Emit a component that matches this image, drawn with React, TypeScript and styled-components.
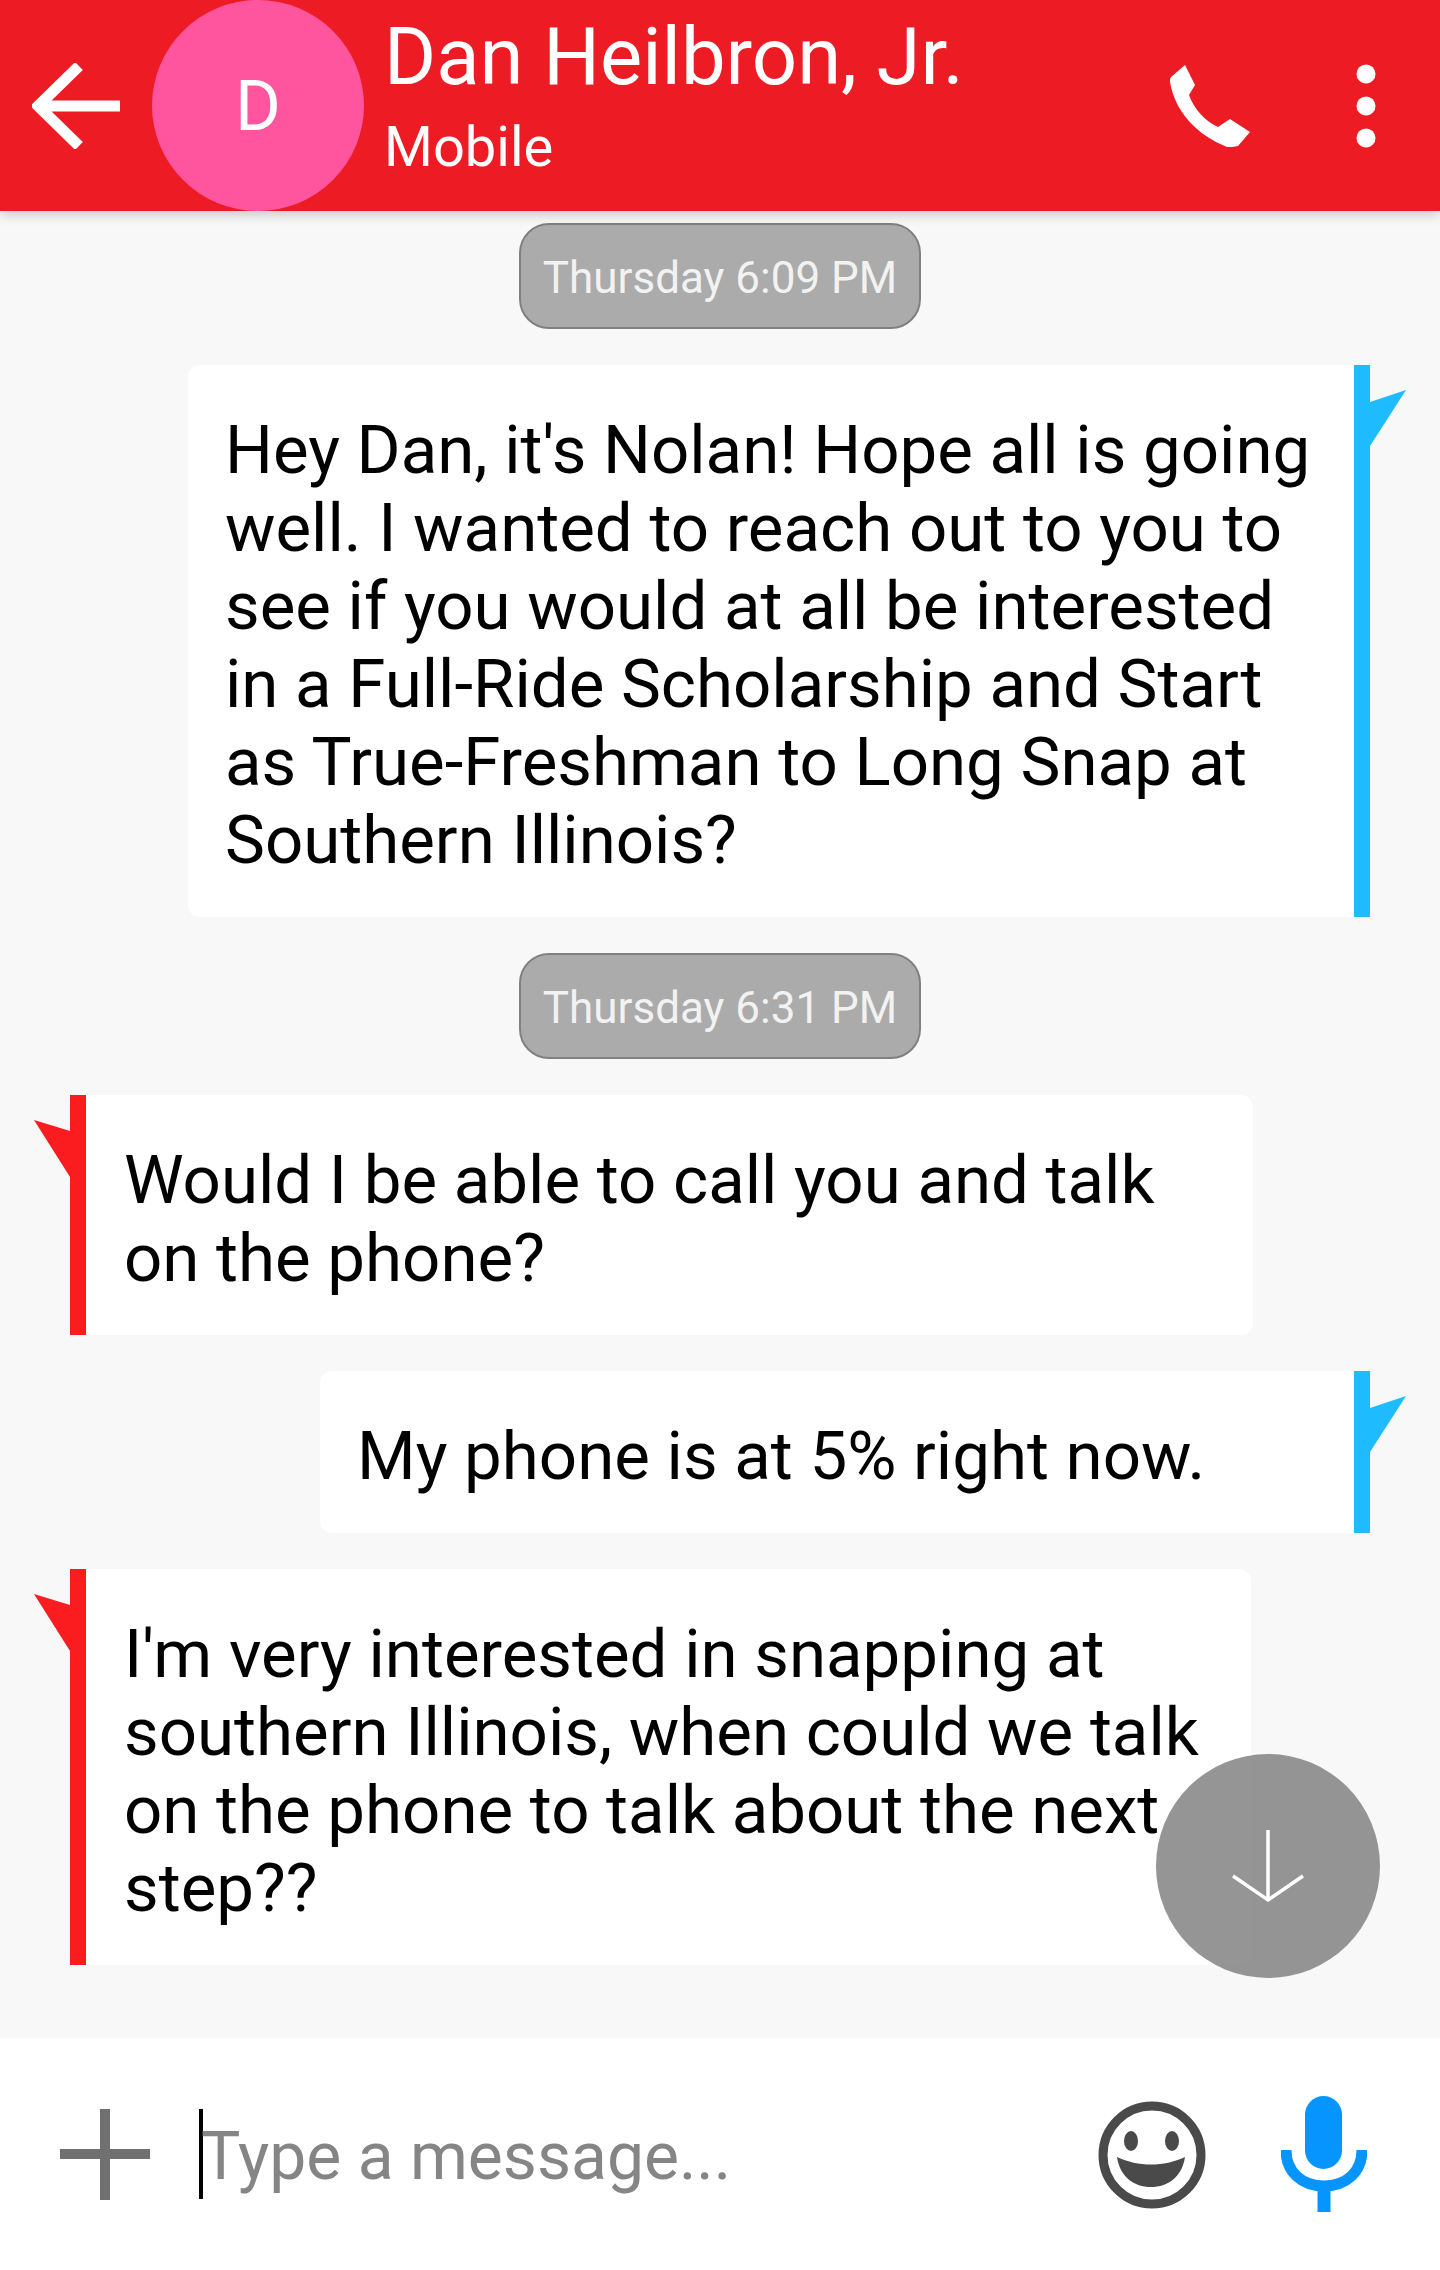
import React from 'react';
import styled, { createGlobalStyle } from 'styled-components';

const GlobalStyle = createGlobalStyle`
  html, body {
    margin: 0;
    padding: 0;
    background: #f8f8f8;
  }
  * {
    box-sizing: border-box;
  }
`;

function BackIcon() {
  return (
    <svg width="88" height="86" viewBox="0 0 88 86" fill="none" stroke="#fff" strokeWidth="11">
      <path d="M88 43H6" />
      <path d="M47 3 6 43l0 0 41 40" strokeLinejoin="miter" />
    </svg>
  );
}

function PhoneIcon() {
  return (
    <svg width="80" height="82" viewBox="0 0 80 82" fill="#fff">
      <path d="M15 0 25 20 19 30C24 44 35 56 48 62L60 54 80 67 68 81C64 82 60 82 57 82 27 70 5 47 0 17 0 14 0 13 1 12Z" />
    </svg>
  );
}

function MenuIcon() {
  return (
    <svg width="20" height="84" viewBox="0 0 20 84" fill="#fff">
      <circle cx="10" cy="10" r="9.5" />
      <circle cx="10" cy="42" r="9.5" />
      <circle cx="10" cy="74" r="9.5" />
    </svg>
  );
}

function PlusIcon() {
  return (
    <svg width="90" height="91" viewBox="0 0 90 91" fill="#707070">
      <rect x="40" width="10" height="91" />
      <rect y="40" width="90" height="10" />
    </svg>
  );
}

function SmileyIcon() {
  return (
    <svg width="108" height="110" viewBox="0 -2 108 110">
      <circle cx="54" cy="54" r="49" fill="none" stroke="#4a4a4a" strokeWidth="9" />
      <ellipse cx="33" cy="40" rx="7" ry="10" fill="#4a4a4a" />
      <ellipse cx="74" cy="40" rx="7" ry="10" fill="#4a4a4a" />
      <path d="M19 56C40 66 66 66 87 56 84 76 70 86 53 86 36 86 22 76 19 56Z" fill="#4a4a4a" />
    </svg>
  );
}

function MicIcon() {
  return (
    <svg width="86" height="116" viewBox="0 0 86 116">
      <rect x="24" width="37" height="73" rx="18.5" fill="#0695ff" />
      <path d="M5 54C5 76 21 90 43 90 65 90 81 76 81 54" fill="none" stroke="#0695ff" strokeWidth="11" />
      <rect x="36.5" y="88" width="13" height="28" fill="#0695ff" />
    </svg>
  );
}

function ArrowDownIcon() {
  return (
    <svg width="74" height="74" viewBox="0 0 74 74" fill="none" stroke="#fff" strokeWidth="3.5">
      <path d="M37 1V71" />
      <path d="M2 47 37 71 72 47" />
    </svg>
  );
}

interface IMessageProps {
  sent?: boolean;
  width: number;
  children: React.ReactNode;
}

function Message({ sent = false, width, children }: IMessageProps) {
  return (
    <Bubble $sent={sent} $width={width}>
      {children}
      <Tail $sent={sent} width="36" height="60" viewBox="0 0 36 60">
        <path d={sent ? 'M0 12 36 0 0 56Z' : 'M36 11 0 0 36 57Z'} />
      </Tail>
    </Bubble>
  );
}

export default function App() {
  return (
    <>
      <GlobalStyle />
      <Page>
        <Header>
          <BackIcon />
          <Avatar>D</Avatar>
          <Contact>
            <ContactName>Dan Heilbron, Jr.</ContactName>
            <ContactType>Mobile</ContactType>
          </Contact>
          <HeaderActions>
            <PhoneIcon />
            <MenuIcon />
          </HeaderActions>
        </Header>

        <Thread>
          <TimeStamp>Thursday 6:09 PM</TimeStamp>
          <Message sent width={1182}>
            Hey Dan, it's Nolan! Hope all is going well. I wanted to reach out to you to see if you
            would at all be interested in a Full-Ride Scholarship and Start as True-Freshman to
            Long Snap at Southern Illinois?
          </Message>
          <TimeStamp>Thursday 6:31 PM</TimeStamp>
          <Message width={1183}>Would I be able to call you and talk on the phone?</Message>
          <Message sent width={1050}>
            My phone is at 5% right now.
          </Message>
          <Message width={1181}>
            I'm very interested in snapping at southern Illinois, when could we talk on the phone
            to talk about the next step??
          </Message>
        </Thread>

        <ScrollDown>
          <ArrowDownIcon />
        </ScrollDown>

        <Composer>
          <PlusIcon />
          <Caret />
          <Placeholder>Type a message...</Placeholder>
          <ComposerActions>
            <SmileyIcon />
            <MicIcon />
          </ComposerActions>
        </Composer>
      </Page>
    </>
  );
}

const Page = styled.div`
  position: relative;
  width: 1440px;
  height: 2270px;
  display: flex;
  flex-direction: column;
  overflow: hidden;
  background: #f8f8f8;
  font-family: Roboto, 'Liberation Sans', sans-serif;
`;

const Header = styled.header`
  position: relative;
  z-index: 1;
  height: 211px;
  flex-shrink: 0;
  display: flex;
  align-items: center;
  padding: 0 64px 0 32px;
  background: #ed1c24;
  box-shadow: 0 3px 12px rgba(0, 0, 0, 0.22);
`;

const Avatar = styled.div`
  width: 212px;
  height: 211px;
  margin-left: 32px;
  flex-shrink: 0;
  display: flex;
  justify-content: center;
  align-items: center;
  border-radius: 50%;
  background: #ff559f;
  color: #fff;
  font-size: 70px;
`;

const Contact = styled.div`
  flex-grow: 1;
  display: flex;
  flex-direction: column;
  align-items: flex-start;
  padding: 3px 0 0 20px;
  color: #fff;
`;

const ContactName = styled.div`
  font-size: 79.6px;
  line-height: 100px;
  margin-top: -26px;
`;

const ContactType = styled.div`
  font-size: 56px;
  line-height: 70px;
  margin-top: 5px;
`;

const HeaderActions = styled.div`
  display: flex;
  align-items: center;
  gap: 106px;
`;

const Thread = styled.main`
  flex-grow: 1;
  display: flex;
  flex-direction: column;
  align-items: center;
  gap: 36px;
  padding-top: 12px;
`;

const TimeStamp = styled.div`
  width: 402px;
  height: 106px;
  display: flex;
  justify-content: center;
  align-items: center;
  padding-top: 3px;
  border: 2px solid #808080;
  border-radius: 30px;
  background: #ababab;
  color: #f2f2f2;
  font-size: 44px;
  white-space: nowrap;
`;

const Bubble = styled.div<{ $sent: boolean; $width: number }>`
  position: relative;
  width: ${(props) => props.$width}px;
  padding: ${(props) => (props.$sent ? '46px 30px 38px 37px' : '46px 30px 38px 38px')};
  align-self: ${(props) => (props.$sent ? 'flex-end' : 'flex-start')};
  margin: ${(props) => (props.$sent ? '0 70px 0 0' : '0 0 0 70px')};
  background: #fff;
  border-radius: ${(props) => (props.$sent ? '12px 0 0 12px' : '0 12px 12px 0')};
  ${(props) =>
    props.$sent ? 'border-right: 16px solid #1ebcff;' : 'border-left: 16px solid #fb1c1f;'}
  color: #000;
  font-size: 67.2px;
  line-height: 78px;
`;

const Tail = styled.svg<{ $sent: boolean }>`
  position: absolute;
  top: 25px;
  ${(props) => (props.$sent ? 'right: -52px;' : 'left: -52px;')}
  fill: ${(props) => (props.$sent ? '#1ebcff' : '#fb1c1f')};
`;

const ScrollDown = styled.div`
  position: absolute;
  left: 1156px;
  top: 1754px;
  width: 224px;
  height: 224px;
  display: flex;
  justify-content: center;
  align-items: center;
  border-radius: 50%;
  background: rgba(130, 130, 130, 0.85);
`;

const Composer = styled.footer`
  height: 232px;
  flex-shrink: 0;
  display: flex;
  align-items: center;
  padding: 0 73px 0 60px;
  background: #fff;
`;

const Caret = styled.span`
  width: 4px;
  height: 90px;
  margin: 0 -2px 0 49px;
  flex-shrink: 0;
  background: #000;
`;

const Placeholder = styled.span`
  flex-grow: 1;
  padding-top: 4px;
  color: #858585;
  font-size: 66px;
`;

const ComposerActions = styled.div`
  display: flex;
  align-items: center;
  gap: 75px;
`;
